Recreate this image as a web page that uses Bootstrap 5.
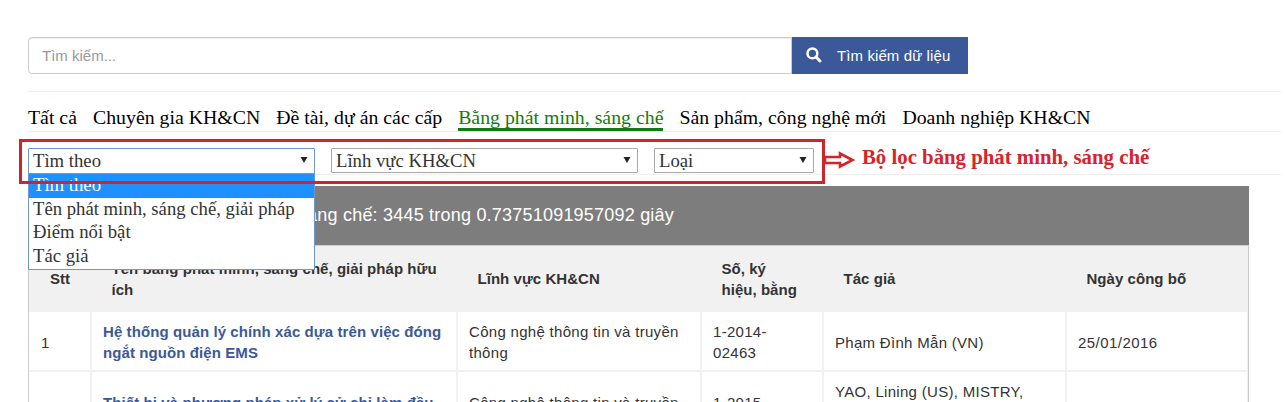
<!DOCTYPE html>
<html lang="vi">
<head>
<meta charset="utf-8">
<title>Bằng phát minh, sáng chế</title>
<link href="https://cdn.jsdelivr.net/npm/bootstrap@5.3.0/dist/css/bootstrap.min.css" rel="stylesheet">
<style>
html,body{overflow:hidden}
body{height:402px;background:#fff;color:#333;font-family:"Liberation Sans",Arial,sans-serif;font-size:15px;line-height:21px}
.page-wrap{padding:37px 4px 0 28px;height:402px;overflow:hidden}
.serif-text{font-family:"Liberation Serif","Times New Roman",serif}
.search-row{width:940px;height:37px}
.search-row .form-control{border:1px solid #ccc;border-radius:4px 0 0 4px;padding:1px 13px 0;font-size:15px;color:#999;box-shadow:inset 0 1px 1px rgba(0,0,0,.075)}
.search-row .form-control::placeholder{color:#999;opacity:1}
.search-row .btn{width:176px;background:#3b5998;color:#fff;border:0;border-radius:0;font-size:15px;padding:0 0 0 14px;letter-spacing:.1px}
.search-row .btn span{margin:2px 0 0 15px}
.search-row .btn svg{margin-top:-1px}
.tabs-row{margin-top:17px;height:41px;border-top:1px solid #eee;border-bottom:1px solid #eee;gap:16px}
.tabs-row a{font-size:19.8px;letter-spacing:.015px;line-height:24px;height:26px;margin-top:13px;color:#000;text-decoration:none;white-space:nowrap}
.tabs-row a.current{color:#107c10;border-bottom:3px solid #107c10}
.filters{height:43px;border-bottom:1px solid #eee;padding-top:16px;gap:16px}
.picker{height:25px;border:1px solid #a9a9a9;border-radius:1px;padding:0 6px 0 4px;font-size:18.7px;line-height:24px;background:#fff}
.picker.opened{border-color:#6f97cf;height:26px}
.options{top:24px;left:-1px;width:287px;height:97px;border:1px solid #6f97cf;background:#fff;z-index:5;font-size:18.7px;line-height:23.6px}
.options div{padding-left:4px;height:23.6px;line-height:22.4px}
.options .chosen{background:#1e90ff;color:#fff}
.outline{left:-9px;top:7px;width:806px;height:45px;border:3px solid #d2232a;z-index:6}
.callout{left:797px;top:13px;z-index:7;color:#d9232b;font-size:20.8px;font-weight:700;white-space:nowrap;line-height:24px}
.callout span{margin-left:5px}
.callout svg{margin-top:1px}
.banner{margin-top:11px;width:1221px;height:59px;background:#7d7d7d;color:#fff;font-size:18px;letter-spacing:.21px}
.banner span{width:646px;text-align:right;white-space:nowrap}
.results{width:1221px;table-layout:fixed;border-collapse:separate;border-spacing:0;letter-spacing:.3px;border:1px solid #ccc;border-bottom:0}
.results th{height:66px;background:#f1f1f1;color:#333;padding:0 12px 1px 19.5px;vertical-align:middle;letter-spacing:.04px}
.results th:first-child{padding-left:21px}
.results td{border-right:2px solid #f1f1f1;border-bottom:2px solid #f1f1f1;padding:9px 11px 7px;vertical-align:middle}
.results td:first-child{padding-left:12px}
.results td:last-child{border-right:1px solid #f1f1f1;letter-spacing:.45px}
.results td b{color:#3b5998;letter-spacing:.09px}
</style>
</head>
<body>
<main class="page-wrap">
  <form class="search-row d-flex">
    <input class="form-control" placeholder="Tìm kiếm...">
    <button type="button" class="btn d-flex align-items-center flex-shrink-0">
      <svg width="16" height="16" viewBox="0 0 16 16" fill="none" stroke="#fff"><circle cx="6.4" cy="6.4" r="4.9" stroke-width="2.5"/><path d="M10 10l4 4" stroke-width="3" stroke-linecap="round"/></svg>
      <span>Tìm kiếm dữ liệu</span>
    </button>
  </form>
  <nav class="tabs-row d-flex serif-text">
    <a href="#">Tất cả</a><a href="#">Chuyên gia KH&amp;CN</a><a href="#">Đề tài, dự án các cấp</a><a href="#" class="current">Bằng phát minh, sáng chế</a><a href="#">Sản phẩm, công nghệ mới</a><a href="#">Doanh nghiệp KH&amp;CN</a>
  </nav>
  <section class="filters d-flex position-relative serif-text">
    <div class="picker opened position-relative d-flex justify-content-between" style="width:287px">
      <span>Tìm theo</span>
      <svg width="8" height="24"><path d="M.5 8h7l-3.500 6z" fill="#222"/></svg>
      <div class="options position-absolute">
        <div class="chosen">Tìm theo</div><div>Tên phát minh, sáng chế, giải pháp</div><div>Điểm nổi bật</div><div>Tác giả</div>
      </div>
    </div>
    <div class="picker d-flex justify-content-between" style="width:307px"><span>Lĩnh vực KH&amp;CN</span><svg width="8" height="24"><path d="M.5 8h7l-3.500 6z" fill="#222"/></svg></div>
    <div class="picker d-flex justify-content-between" style="width:160px"><span>Loại</span><svg width="8" height="24"><path d="M.5 8h7l-3.500 6z" fill="#222"/></svg></div>
    <div class="outline position-absolute"></div>
    <div class="callout position-absolute d-flex">
      <svg width="32" height="24" viewBox="0 0 32 24" fill="#fff" stroke="#d9232b" stroke-width="2.600"><path d="M0 11h15V7.500l12.500 6.500L15 20.500V17H0z"/></svg>
      <span>Bộ lọc bằng phát minh, sáng chế</span>
    </div>
  </section>
  <div class="banner d-flex align-items-center"><span>Tổng số bằng phát minh, sáng chế: 3445 trong 0.73751091957092 giây</span></div>
  <table class="results">
    <colgroup><col style="width:63px"><col style="width:366px"><col style="width:244px"><col style="width:122px"><col style="width:243px"><col></colgroup>
    <thead><tr><th>Stt</th><th>Tên bằng phát minh, sáng chế, giải pháp hữu ích</th><th>Lĩnh vực KH&amp;CN</th><th>Số, ký<br>hiệu, bằng</th><th>Tác giả</th><th>Ngày công bố</th></tr></thead>
    <tbody>
      <tr><td>1</td><td><b>Hệ thống quản lý chính xác dựa trên việc đóng<br>ngắt nguồn điện EMS</b></td><td>Công nghệ thông tin và truyền thông</td><td>1-2014-<br>02463</td><td>Phạm Đình Mẫn (VN)</td><td>25/01/2016</td></tr>
      <tr><td></td><td><b>Thiết bị và phương pháp xử lý cử chỉ làm đầu<br>&nbsp;</b></td><td>Công nghệ thông tin và truyền<br>&nbsp;</td><td>1-2015-<br>&nbsp;</td><td>YAO, Lining (US), MISTRY,<br>&nbsp;<br>&nbsp;</td><td></td></tr>
    </tbody>
  </table>
</main>
<script src="https://cdn.jsdelivr.net/npm/bootstrap@5.3.0/dist/js/bootstrap.bundle.min.js"></script>
</body>
</html>
